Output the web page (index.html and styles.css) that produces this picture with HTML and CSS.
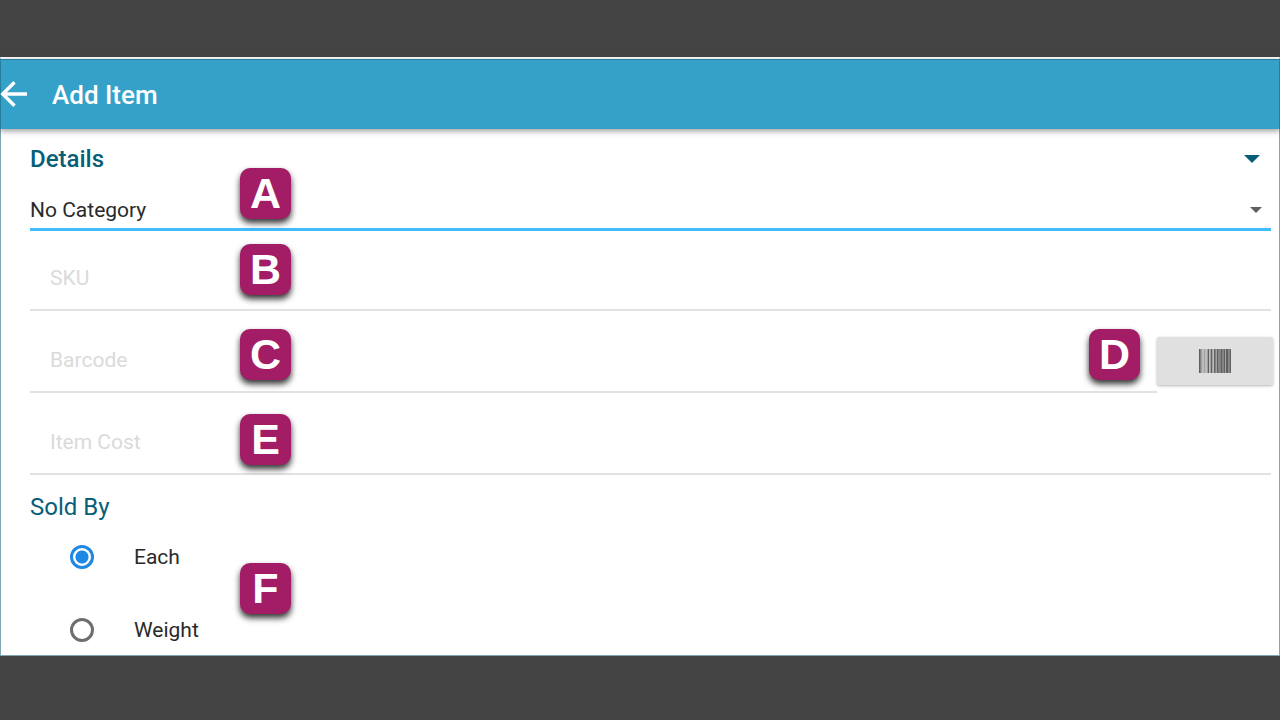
FILE: index.html
```html
<!DOCTYPE html>
<html lang="en">
<head>
    <meta charset="UTF-8">
    <meta name="viewport" content="width=device-width, initial-scale=1.0">
    <title>Add Item</title>
    <link rel="stylesheet" href="styles.css">
</head>
<body>
    <main class="window">
        <header class="app-bar">
            <button class="back" type="button" aria-label="Back">
                <svg width="28" height="28" viewBox="0 0 28 28" fill="none" stroke="#fff" stroke-width="3.4">
                    <path d="M27 13H3M14.5 1.2L2.7 13l11.8 11.8"/>
                </svg>
            </button>
            <h1>Add Item</h1>
        </header>

        <form class="item-form">
            <button class="section-toggle" type="button">Details</button>

            <div class="select-field">
                <select aria-label="Category">
                    <option>No Category</option>
                </select>
            </div>

            <div class="field">
                <input type="text" placeholder="SKU" aria-label="SKU">
            </div>
            <div class="field field-scan">
                <input type="text" placeholder="Barcode" aria-label="Barcode">
                <button class="scan" type="button" aria-label="Scan barcode">
                    <svg width="32" height="24" viewBox="0 0 32 24">
                        <path fill="#a2a2a2" d="M0 0h32v24H0z"/>
                        <path fill="#bcbcbc" d="M3 0h2v24H3zM6 0h2v24H6zM10 0h1v24h-1zM14 0h1v24h-1z"/>
                        <path fill="#848484" d="M1 0h1v24H1zM16 0h1v24h-1zM19 0h3v24h-3zM23 0h2v24h-2zM29 0h2v24h-2z"/>
                        <path fill="#606060" d="M0 0h1v24H0zM9 0h1v24H9zM12 0h1v24h-1zM15 0h1v24h-1zM18 0h1v24h-1zM22 0h1v24h-1zM25 0h1v24h-1zM27 0h2v24h-2zM31 0h1v24h-1z"/>
                    </svg>
                </button>
            </div>
            <div class="field">
                <input type="text" placeholder="Item Cost" aria-label="Item Cost">
            </div>

            <h2>Sold By</h2>
            <div class="options">
                <label><input type="radio" name="sold-by" checked>Each</label>
                <label><input type="radio" name="sold-by">Weight</label>
            </div>
        </form>

        <span class="badge badge-a">A</span>
        <span class="badge badge-b">B</span>
        <span class="badge badge-c">C</span>
        <span class="badge badge-d">D</span>
        <span class="badge badge-e">E</span>
        <span class="badge badge-f">F</span>
    </main>
</body>
</html>
```
FILE: styles.css
```css
* {
    box-sizing: border-box;
}
body {
    margin: 0;
    padding: 57px 0 64px;
    background-color: #444;
    color: #2a2a2a;
    font-family: Roboto, sans-serif;
    font-size: 21px;
}
button, input, select {
    font: inherit;
    color: inherit;
    border: none;
    border-radius: 0;
    background: none;
    margin: 0;
    padding: 0;
}
h1, h2 {
    margin: 0;
}
.window {
    position: relative;
    background-color: #fff;
    border: 1px solid #7fa5b3;
    border-top: 2px solid #fff;
}

/* Header */
.app-bar {
    display: flex;
    align-items: center;
    gap: 24px;
    height: 70px;
    margin: 0 -1px;
    border: 1px solid #267d9c;
    border-bottom: none;
    background-color: #35a1c9;
    color: #fff;
    box-shadow: 0 2px 6px rgba(0, 0, 0, 0.4);
}
.app-bar h1 {
    font-size: 26px;
    font-weight: 500;
}
.back {
    display: flex;
    margin-left: -1px;
}

/* Form */
.item-form {
    padding: 0 8px 12px 29px;
}
.section-toggle {
    display: flex;
    align-items: center;
    justify-content: space-between;
    width: 100%;
    height: 60px;
    padding-right: 11px;
    color: #075e78;
    font-size: 24px;
    font-weight: 500;
}
.section-toggle::after {
    content: "";
    border: 8px solid transparent;
    border-top-color: #075e78;
    border-bottom: none;
}
.select-field {
    position: relative;
    margin-bottom: 14px;
}
.select-field::after {
    content: "";
    position: absolute;
    right: 9px;
    top: 18px;
    border: 6px solid transparent;
    border-top-color: #616161;
    border-bottom: none;
    pointer-events: none;
}
.select-field select {
    appearance: none;
    display: block;
    width: 100%;
    height: 42px;
    padding-top: 2px;
    border-bottom: 3px solid #40bdfc;
}
.field {
    display: flex;
    margin-bottom: 16px;
}
.field input {
    flex: 1;
    height: 66px;
    padding: 2px 0 0 20px;
    border-bottom: 2px solid #e2e2e2;
}
.field input::placeholder {
    color: #dadada;
    opacity: 1;
}
.field-scan {
    margin-right: -2px;
}
.scan {
    display: flex;
    align-items: center;
    justify-content: center;
    width: 116px;
    height: 48px;
    margin-top: 10px;
    border-radius: 2px;
    background-color: #e0e0e0;
    box-shadow: 0 1px 3px rgba(0, 0, 0, 0.3);
}
.item-form h2 {
    padding-top: 1px;
    color: #075e78;
    font-size: 24px;
    font-weight: 400;
    line-height: 30px;
    margin-bottom: 22px;
}
.options {
    display: flex;
    flex-direction: column;
    gap: 47px;
    padding-left: 40px;
}
.options label {
    display: flex;
    align-items: center;
    gap: 40px;
    height: 26px;
}
.options input {
    appearance: none;
    width: 24px;
    height: 24px;
    border: 3px solid #6e6e6e;
    border-radius: 50%;
}
.options input:checked {
    border-color: #1e88e5;
    background: radial-gradient(#1e88e5 0 6px, transparent 7px);
}

/* Callout letters */
.badge {
    position: absolute;
    left: 239px;
    width: 51px;
    height: 51px;
    border-radius: 10px;
    background-color: #a31c66;
    box-shadow: 0 4px 6px rgba(0, 0, 0, 0.8);
    color: #fff;
    font: bold 43px/51px "Liberation Sans", Arial, sans-serif;
    text-align: center;
}
.badge-a { top: 109px; }
.badge-b { top: 185px; }
.badge-c { top: 270px; }
.badge-d { top: 270px; left: auto; right: 139px; }
.badge-e { top: 355px; }
.badge-f { top: 504px; }
```
